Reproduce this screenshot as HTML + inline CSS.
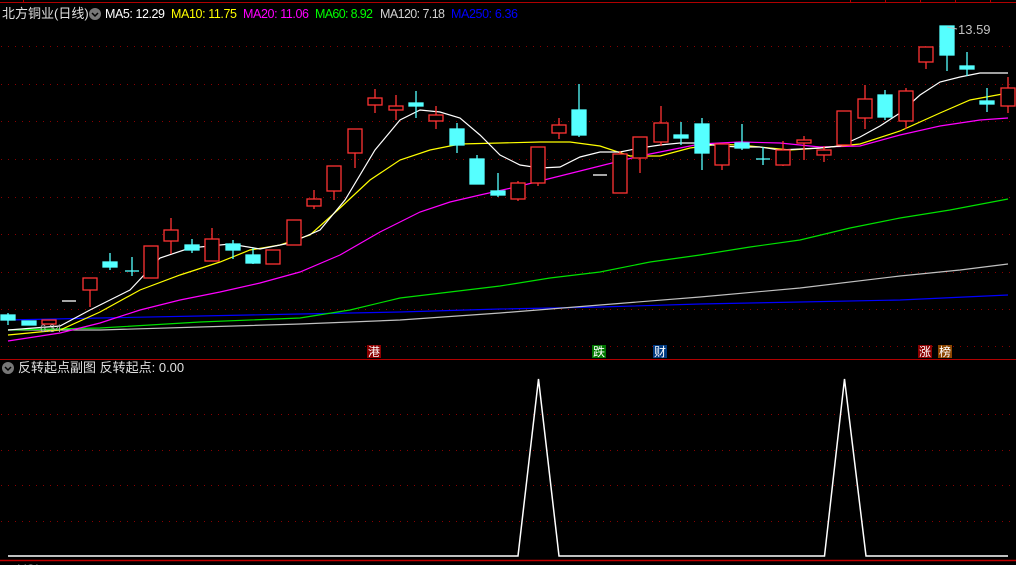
<!DOCTYPE html>
<html><head><meta charset="utf-8"><style>
html,body{margin:0;padding:0;background:#000;width:1016px;height:565px;overflow:hidden}
svg{display:block}
text{font-family:"Liberation Sans","Noto Sans CJK SC",sans-serif}
</style></head><body>
<svg width="1016" height="565" viewBox="0 0 1016 565" xmlns="http://www.w3.org/2000/svg">
<rect width="1016" height="565" fill="#000"/>
<line x1="0" y1="2.5" x2="1016" y2="2.5" stroke="#b00000" stroke-width="1"/>
<g stroke="#b00000"><line x1="23.5" y1="0" x2="23.5" y2="3"/><line x1="850.5" y1="0" x2="850.5" y2="3"/><line x1="885.5" y1="0" x2="885.5" y2="3"/><line x1="920.5" y1="0" x2="920.5" y2="3"/><line x1="955.5" y1="0" x2="955.5" y2="3"/><line x1="990.5" y1="0" x2="990.5" y2="3"/></g>
<line x1="0" y1="359.5" x2="1016" y2="359.5" stroke="#b00000"/>
<line x1="0" y1="560.5" x2="1016" y2="560.5" stroke="#c00000" stroke-width="1.5"/>
<g stroke="#8a0000" stroke-dasharray="1 6" stroke-width="1">
<line x1="1" y1="46.5" x2="1016" y2="46.5"/><line x1="1" y1="84.5" x2="1016" y2="84.5"/><line x1="1" y1="121.5" x2="1016" y2="121.5"/><line x1="1" y1="159.5" x2="1016" y2="159.5"/><line x1="1" y1="197.5" x2="1016" y2="197.5"/><line x1="1" y1="234.5" x2="1016" y2="234.5"/><line x1="1" y1="272.5" x2="1016" y2="272.5"/><line x1="1" y1="309.5" x2="1016" y2="309.5"/><line x1="1" y1="346.5" x2="1016" y2="346.5"/>
<line x1="1" y1="414.5" x2="1016" y2="414.5"/><line x1="1" y1="450.5" x2="1016" y2="450.5"/><line x1="1" y1="485.5" x2="1016" y2="485.5"/><line x1="1" y1="521.5" x2="1016" y2="521.5"/>
</g>
<g fill="none" stroke-width="1.2">
<polyline stroke="#0000ff" points="8,320 100,318 200,316 300,314 400,312 500,309 600,307 700,304 800,302 900,300 1008,295"/>
<polyline stroke="#c0c0c0" points="8,330 100,330 200,327 300,324 400,320 500,313 600,305 700,297 800,288 900,276 960,270 1008,264"/>
<polyline stroke="#00e000" points="8,330 100,328 200,322 300,318 350,310 400,298 450,292 500,286 550,278 600,272 650,262 700,255 750,247 800,240 850,228 900,218 950,210 1008,199"/>
<polyline stroke="#ff00ff" points="8,341 60,333 100,323 140,310 180,300 220,292 260,283 300,272 340,255 380,232 420,212 450,202 480,195 520,186 560,176 600,166 640,156 680,148 700,144 740,142 780,143 820,147 860,146 900,135 940,126 980,120 1008,118"/>
<polyline stroke="#ffff00" points="8,335 60,330 100,312 140,290 180,275 220,262 250,250 280,245 310,235 340,208 370,180 400,160 430,150 460,144 500,143 540,142 570,142 600,146 630,156 660,156 690,148 720,144 750,146 790,150 820,148 860,144 900,131 940,113 970,100 1008,93"/>
<polyline stroke="#ffffff" points="8,330 60,326 90,310 130,290 160,258 190,248 230,244 260,249 290,243 320,230 345,200 375,150 400,120 420,110 440,112 460,118 480,135 500,155 520,165 540,168 560,167 580,157 600,152 620,152 640,148 660,145 680,143 700,143 720,146 740,147 760,147 780,150 800,149 820,148 840,146 860,137 880,126 900,113 920,95 940,82 960,77 980,73 1008,73"/>
</g>
<g fill="none" stroke="#ff3333" stroke-width="1.3">
<rect x="42" y="320" width="14" height="4"/>
<line x1="90" y1="290" x2="90" y2="307"/><rect x="83" y="278" width="14" height="12" fill="#000"/>
<rect x="144" y="246" width="14" height="32" fill="#000"/>
<line x1="171" y1="218" x2="171" y2="254"/><rect x="164" y="230" width="14" height="11" fill="#000"/>
<line x1="212" y1="228" x2="212" y2="239"/><rect x="205" y="239" width="14" height="22" fill="#000"/>
<rect x="266" y="250" width="14" height="14" fill="#000"/>
<rect x="287" y="220" width="14" height="25" fill="#000"/>
<line x1="314" y1="190" x2="314" y2="209"/><rect x="307" y="199" width="14" height="7" fill="#000"/>
<line x1="334" y1="191" x2="334" y2="200"/><rect x="327" y="166" width="14" height="25" fill="#000"/>
<line x1="355" y1="153" x2="355" y2="168"/><rect x="348" y="129" width="14" height="24" fill="#000"/>
<line x1="375" y1="89" x2="375" y2="113"/><rect x="368" y="98" width="14" height="7" fill="#000"/>
<line x1="396" y1="95" x2="396" y2="120"/><rect x="389" y="106" width="14" height="4" fill="#000"/>
<line x1="436" y1="106" x2="436" y2="129"/><rect x="429" y="115" width="14" height="6" fill="#000"/>
<line x1="518" y1="181" x2="518" y2="201"/><rect x="511" y="183" width="14" height="16" fill="#000"/>
<line x1="538" y1="183" x2="538" y2="186"/><rect x="531" y="147" width="14" height="36" fill="#000"/>
<line x1="559" y1="118" x2="559" y2="139"/><rect x="552" y="125" width="14" height="8" fill="#000"/>
<rect x="613" y="154" width="14" height="39" fill="#000"/><line x1="620" y1="151" x2="620" y2="154"/>
<line x1="640" y1="158" x2="640" y2="173"/><rect x="633" y="137" width="14" height="21" fill="#000"/>
<line x1="661" y1="106" x2="661" y2="146"/><rect x="654" y="123" width="14" height="19" fill="#000"/>
<line x1="722" y1="165" x2="722" y2="170"/><rect x="715" y="144" width="14" height="21" fill="#000"/>
<line x1="783" y1="141" x2="783" y2="166"/><rect x="776" y="150" width="14" height="15" fill="#000"/>
<line x1="804" y1="136" x2="804" y2="160"/><rect x="797" y="140" width="14" height="3" fill="#000"/>
<line x1="824" y1="146" x2="824" y2="162"/><rect x="817" y="150" width="14" height="5" fill="#000"/>
<rect x="837" y="111" width="14" height="34" fill="#000"/>
<line x1="865" y1="85" x2="865" y2="129"/><rect x="858" y="99" width="14" height="19" fill="#000"/>
<line x1="906" y1="88" x2="906" y2="129"/><rect x="899" y="91" width="14" height="30" fill="#000"/>
<line x1="926" y1="62" x2="926" y2="69"/><rect x="919" y="47" width="14" height="15" fill="#000"/>
<line x1="1008" y1="77" x2="1008" y2="113"/><rect x="1001" y="88" width="14" height="18" fill="#000"/>
</g>
<g fill="#55ffff" stroke="#55ffff" stroke-width="1.3">
<line x1="8" y1="313" x2="8" y2="325"/><rect x="1" y="315" width="14" height="5"/>
<rect x="22" y="321" width="14" height="4"/>
<line x1="110" y1="253" x2="110" y2="270"/><rect x="103" y="262" width="14" height="5"/>
<line x1="132" y1="257" x2="132" y2="276"/><line x1="125" y1="271" x2="139" y2="271"/>
<line x1="192" y1="239" x2="192" y2="253"/><rect x="185" y="245" width="14" height="5"/>
<line x1="233" y1="240" x2="233" y2="259"/><rect x="226" y="244" width="14" height="6"/>
<line x1="253" y1="248" x2="253" y2="264"/><rect x="246" y="255" width="14" height="8"/>
<line x1="416" y1="91" x2="416" y2="118"/><rect x="409" y="103" width="14" height="3"/>
<line x1="457" y1="123" x2="457" y2="153"/><rect x="450" y="129" width="14" height="16"/>
<line x1="477" y1="155" x2="477" y2="159"/><rect x="470" y="159" width="14" height="25"/>
<line x1="498" y1="173" x2="498" y2="197"/><rect x="491" y="191" width="14" height="4"/>
<line x1="579" y1="84" x2="579" y2="137"/><rect x="572" y="110" width="14" height="25"/>
<line x1="681" y1="122" x2="681" y2="145"/><rect x="674" y="135" width="14" height="3"/>
<line x1="702" y1="118" x2="702" y2="170"/><rect x="695" y="124" width="14" height="29"/>
<line x1="742" y1="124" x2="742" y2="150"/><rect x="735" y="143" width="14" height="5"/>
<line x1="763" y1="147" x2="763" y2="165"/><line x1="756" y1="159" x2="770" y2="159"/>
<line x1="885" y1="90" x2="885" y2="120"/><rect x="878" y="95" width="14" height="22"/>
<line x1="947" y1="55" x2="947" y2="71"/><rect x="940" y="26" width="14" height="29"/>
<line x1="967" y1="52" x2="967" y2="76"/><rect x="960" y="66" width="14" height="3"/>
<line x1="987" y1="88" x2="987" y2="112"/><rect x="980" y="101" width="14" height="3"/>
</g>
<g stroke="#fff" stroke-width="1.3"><line x1="62" y1="301" x2="76" y2="301"/><line x1="593" y1="175" x2="607" y2="175"/></g>
<text x="958" y="34" fill="#c0c0c0" font-size="13">13.59</text>
<line x1="947" y1="27" x2="957" y2="29" stroke="#c0c0c0"/>
<text x="40" y="332" fill="#b0b0b0" font-size="11">6.34</text>
<text x="2" y="18" fill="#e0e0e0" font-size="13">北方铜业(日线)</text>
<circle cx="95" cy="14" r="6" fill="#777"/><path d="M92,13 L95,16 L98,13" stroke="#000" stroke-width="1.5" fill="none"/>
<g font-size="12.5">
<text x="105" y="18" fill="#fff" textLength="60">MA5: 12.29</text>
<text x="171" y="18" fill="#ffff00" textLength="66">MA10: 11.75</text>
<text x="243" y="18" fill="#ff00ff" textLength="66">MA20: 11.06</text>
<text x="315" y="18" fill="#00ff00" textLength="58">MA60: 8.92</text>
<text x="380" y="18" fill="#d0d0d0" textLength="65">MA120: 7.18</text>
<text x="451" y="18" fill="#0000ff" textLength="67">MA250: 6.36</text>
</g>
<g font-size="12">
<rect x="367" y="345" width="14" height="13" fill="#8b0000"/><text x="368" y="356" fill="#fff">港</text>
<rect x="592" y="345" width="14" height="13" fill="#007700"/><text x="593" y="356" fill="#fff">跌</text>
<rect x="653" y="345" width="14" height="13" fill="#003a80"/><text x="654" y="356" fill="#fff">财</text>
<rect x="918" y="345" width="14" height="13" fill="#8b0000"/><text x="919" y="356" fill="#fff">涨</text>
<rect x="938" y="345" width="14" height="13" fill="#8b4500"/><text x="939" y="356" fill="#fff">榜</text>
</g>
<circle cx="8" cy="368" r="6" fill="#777"/><path d="M5,367 L8,370 L11,367" stroke="#000" stroke-width="1.5" fill="none"/>
<text x="18" y="372" fill="#e0e0e0" font-size="13">反转起点副图  反转起点: 0.00</text>
<polyline fill="none" stroke="#fff" stroke-width="1.5" points="8,556 518,556 538.5,379 559,556 824.5,556 844.5,379 866,556 1008,556"/>
<text x="18" y="573" fill="#aaa" font-size="12">VOL</text>
</svg>
</body></html>
